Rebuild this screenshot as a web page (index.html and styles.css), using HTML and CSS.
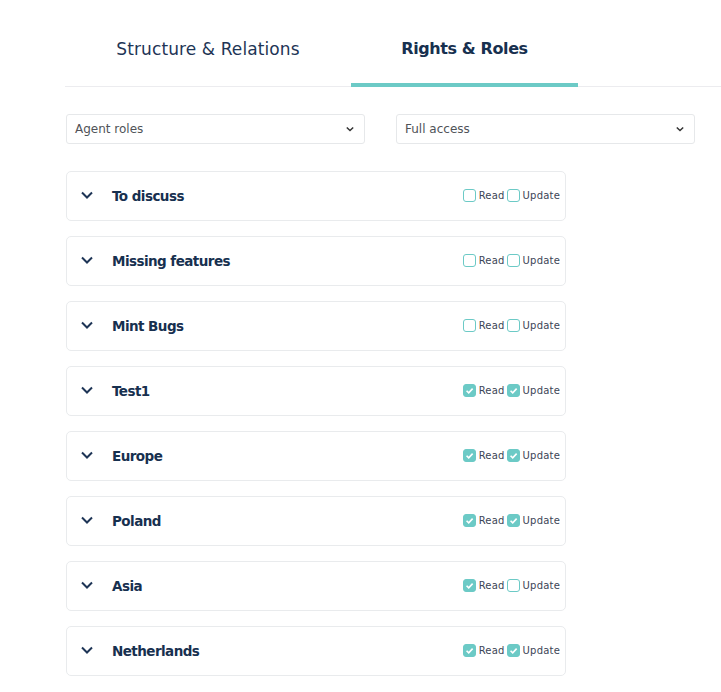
FILE: index.html
```html
<!DOCTYPE html>
<html>
<head>
<meta charset="utf-8">
<link rel="stylesheet" href="styles.css">
</head>
<body>
<div class="page">
  <div class="tabs">
    <div class="tab">Structure &amp; Relations</div>
    <div class="tab active">Rights &amp; Roles</div>
  </div>
  <div class="filters">
    <div class="select"><span>Agent roles</span><svg class="sel-chev" viewBox="0 0 10 6" width="8" height="6"><path d="M1 1l4 4 4-4" fill="none" stroke="#333" stroke-width="1.8"/></svg></div>
    <div class="select"><span>Full access</span><svg class="sel-chev" viewBox="0 0 10 6" width="8" height="6"><path d="M1 1l4 4 4-4" fill="none" stroke="#333" stroke-width="1.8"/></svg></div>
  </div>
  <div class="list">
    <div class="card"><svg class="chev" viewBox="0 0 12 8" width="12" height="8"><path d="M1 1.5l5 5 5-5" fill="none" stroke="#1e3556" stroke-width="2"/></svg><div class="title">To discuss</div><div class="perms"><span class="cb"></span><span class="lbl">Read</span><span class="cb"></span><span class="lbl">Update</span></div></div>
    <div class="card"><svg class="chev" viewBox="0 0 12 8" width="12" height="8"><path d="M1 1.5l5 5 5-5" fill="none" stroke="#1e3556" stroke-width="2"/></svg><div class="title">Missing features</div><div class="perms"><span class="cb"></span><span class="lbl">Read</span><span class="cb"></span><span class="lbl">Update</span></div></div>
    <div class="card"><svg class="chev" viewBox="0 0 12 8" width="12" height="8"><path d="M1 1.5l5 5 5-5" fill="none" stroke="#1e3556" stroke-width="2"/></svg><div class="title">Mint Bugs</div><div class="perms"><span class="cb"></span><span class="lbl">Read</span><span class="cb"></span><span class="lbl">Update</span></div></div>
    <div class="card"><svg class="chev" viewBox="0 0 12 8" width="12" height="8"><path d="M1 1.5l5 5 5-5" fill="none" stroke="#1e3556" stroke-width="2"/></svg><div class="title">Test1</div><div class="perms"><span class="cb on"><svg viewBox="0 0 12 12" width="13" height="13"><path d="M3.3 6.2l2 2 3.6-3.9" fill="none" stroke="#fff" stroke-width="1.5"/></svg></span><span class="lbl">Read</span><span class="cb on"><svg viewBox="0 0 12 12" width="13" height="13"><path d="M3.3 6.2l2 2 3.6-3.9" fill="none" stroke="#fff" stroke-width="1.5"/></svg></span><span class="lbl">Update</span></div></div>
    <div class="card"><svg class="chev" viewBox="0 0 12 8" width="12" height="8"><path d="M1 1.5l5 5 5-5" fill="none" stroke="#1e3556" stroke-width="2"/></svg><div class="title">Europe</div><div class="perms"><span class="cb on"><svg viewBox="0 0 12 12" width="13" height="13"><path d="M3.3 6.2l2 2 3.6-3.9" fill="none" stroke="#fff" stroke-width="1.5"/></svg></span><span class="lbl">Read</span><span class="cb on"><svg viewBox="0 0 12 12" width="13" height="13"><path d="M3.3 6.2l2 2 3.6-3.9" fill="none" stroke="#fff" stroke-width="1.5"/></svg></span><span class="lbl">Update</span></div></div>
    <div class="card"><svg class="chev" viewBox="0 0 12 8" width="12" height="8"><path d="M1 1.5l5 5 5-5" fill="none" stroke="#1e3556" stroke-width="2"/></svg><div class="title">Poland</div><div class="perms"><span class="cb on"><svg viewBox="0 0 12 12" width="13" height="13"><path d="M3.3 6.2l2 2 3.6-3.9" fill="none" stroke="#fff" stroke-width="1.5"/></svg></span><span class="lbl">Read</span><span class="cb on"><svg viewBox="0 0 12 12" width="13" height="13"><path d="M3.3 6.2l2 2 3.6-3.9" fill="none" stroke="#fff" stroke-width="1.5"/></svg></span><span class="lbl">Update</span></div></div>
    <div class="card"><svg class="chev" viewBox="0 0 12 8" width="12" height="8"><path d="M1 1.5l5 5 5-5" fill="none" stroke="#1e3556" stroke-width="2"/></svg><div class="title">Asia</div><div class="perms"><span class="cb on"><svg viewBox="0 0 12 12" width="13" height="13"><path d="M3.3 6.2l2 2 3.6-3.9" fill="none" stroke="#fff" stroke-width="1.5"/></svg></span><span class="lbl">Read</span><span class="cb"></span><span class="lbl">Update</span></div></div>
    <div class="card"><svg class="chev" viewBox="0 0 12 8" width="12" height="8"><path d="M1 1.5l5 5 5-5" fill="none" stroke="#1e3556" stroke-width="2"/></svg><div class="title">Netherlands</div><div class="perms"><span class="cb on"><svg viewBox="0 0 12 12" width="13" height="13"><path d="M3.3 6.2l2 2 3.6-3.9" fill="none" stroke="#fff" stroke-width="1.5"/></svg></span><span class="lbl">Read</span><span class="cb on"><svg viewBox="0 0 12 12" width="13" height="13"><path d="M3.3 6.2l2 2 3.6-3.9" fill="none" stroke="#fff" stroke-width="1.5"/></svg></span><span class="lbl">Update</span></div></div>
  </div>
</div>
</body>
</html>
```
FILE: styles.css
```css
* { box-sizing: border-box; }
html, body { margin: 0; padding: 0; background: #fff; }
body { font-family: "DejaVu Sans", "Noto Sans", sans-serif; color: #1e3556; }
.page { padding-left: 65px; }
.tabs {
  display: flex;
  height: 87px;
  border-bottom: 1px solid #ececef;
}
.tab {
  width: 286px;
  padding-top: 39px;
  text-align: center;
  font-size: 17px;
  color: #1e3556;
  letter-spacing: 0.1px;
}
.tab.active {
  width: 227px;
  font-weight: bold;
  font-size: 16px;
  letter-spacing: -0.4px;
  padding-top: 39px;
  border-bottom: 4px solid #6ccac6;
  margin-bottom: -1px;
  height: 87px;
  color: #17304f;
}
.filters {
  display: flex;
  gap: 31px;
  margin-top: 27px;
  padding-left: 1px;
}
.select {
  width: 299px;
  height: 30px;
  border: 1px solid #e6e8ea;
  border-radius: 3px;
  display: flex;
  align-items: center;
  justify-content: space-between;
  padding: 0 8px 0 8px;
  font-size: 12px;
  color: #505358;
}
.sel-chev { margin-right: 2px; }
.list {
  margin-top: 27px;
  padding-left: 1px;
  display: flex;
  flex-direction: column;
  gap: 15px;
}
.card {
  width: 500px;
  height: 50px;
  border: 1px solid #e9ebed;
  border-radius: 5px;
  display: flex;
  align-items: center;
  padding-left: 14px;
  padding-right: 3px;
}
.chev { margin-top: -2px; }
.title {
  margin-left: 19px;
  font-size: 13.5px;
  font-weight: bold;
  color: #17304f;
  letter-spacing: -0.55px;
  flex: 1;
  margin-top: -1px;
}
.perms {
  display: flex;
  align-items: center;
  font-size: 10px;
  color: #3c4556;
  margin-top: -2px;
}
.cb {
  width: 13px;
  height: 13px;
  border: 1px solid #6ccac6;
  border-radius: 3px;
  display: inline-block;
  background: #fff;
}
.cb.on { background: #6ccac6; border-color: #6ccac6; }
.cb svg { display: block; margin: -1px; }
.lbl { margin-left: 3px; margin-right: 2px; letter-spacing: 0.2px; }
```
